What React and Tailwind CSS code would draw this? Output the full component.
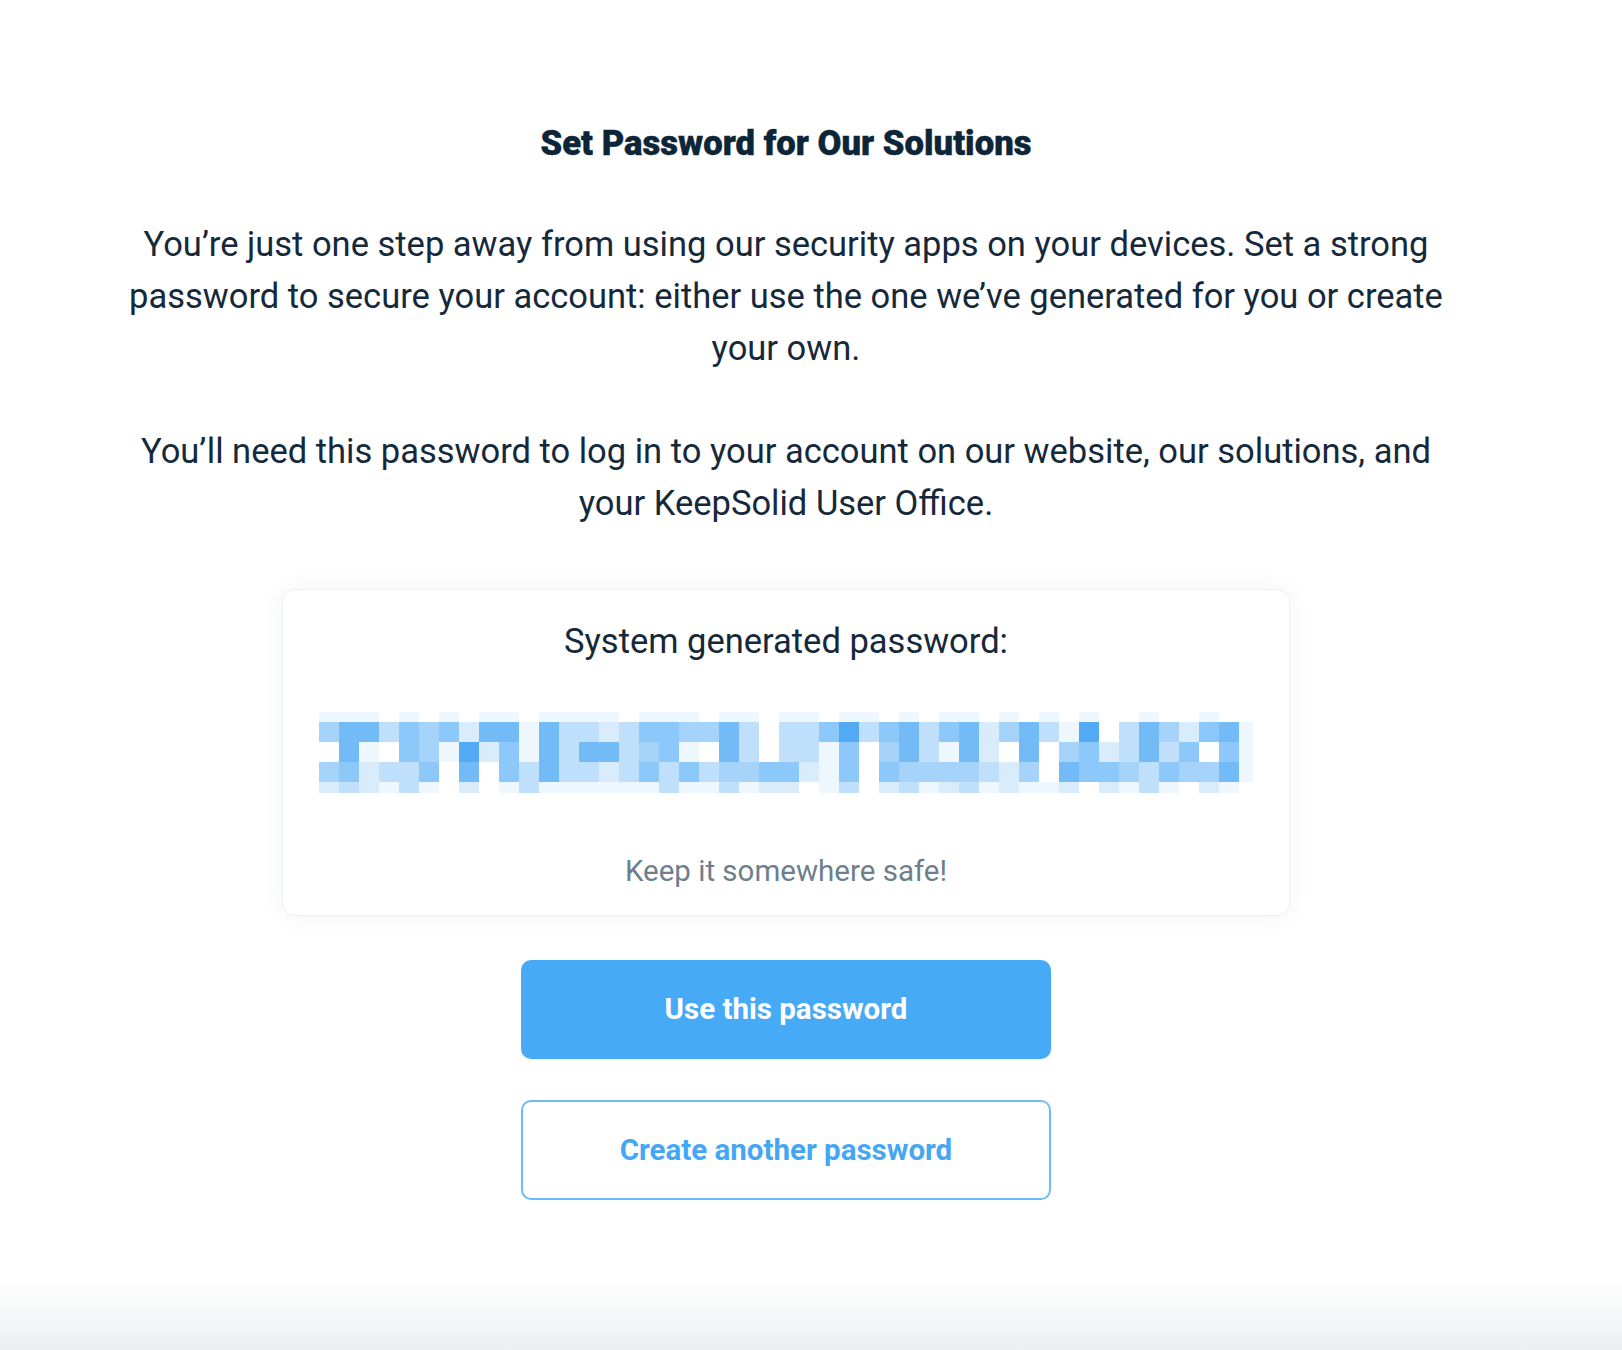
const palette = ["#ffffff", "#eef6fe", "#d9ecfc", "#bfdffb", "#a6d3fa", "#8cc8f9", "#72bbf7", "#52a9f4"];

// blurred password, one string per row, one digit per 20px cell
const rows = [
  { h: 10, cells: "1110101011011110111011011" + "01101011010" + "10100100100" },
  { h: 20, cells: "4663545266163323554463033" + "57356356246" + "31703642561" },
  { h: 20, cells: "0610541725163663451063033" + "15046316206" + "04523635051" },
  { h: 20, cells: "4523350605363323535344552" + "15054444324" + "06554354461" },
  { h: 11, cells: "2321310201311111131131220" + "13023123121" + "12021310210" },
];

function BlurredPassword() {
  let y = 0;
  const rects = [];
  rows.forEach((row, r) => {
    for (let c = 0; c < 47; c++) {
      const lvl = Number(row.cells[c] || 0);
      if (lvl === 0) continue;
      const w = c === 46 ? 14 : 20;
      rects.push(
        <rect key={r + "-" + c} x={c * 20} y={y} width={w} height={row.h} fill={palette[c === 46 ? Math.min(lvl, 1) : lvl]} />
      );
    }
    y += row.h;
  });
  return (
    <svg width="934" height="81" viewBox="0 0 934 81" shapeRendering="crispEdges" className="block">
      {rects}
    </svg>
  );
}

export default function App() {
  return (
    <div className="h-[1350px] w-full bg-[linear-gradient(to_bottom,#ffffff_1280px,#eceef0_1350px)] font-['Roboto',sans-serif]">
      <div className="flex flex-col items-center pt-[121px] pr-[50px]">
        <h1 className="text-[34.7px] leading-[44px] font-black text-[#0c2537] [-webkit-text-stroke:0.4px_#0c2537]">
          Set Password for Our Solutions
        </h1>

        <p className="mt-[53px] w-[1338px] text-center text-[34.5px] leading-[52px] text-[#15293b]">
          You’re just one step away from using our security apps on your devices. Set a strong password to secure your
          account: either use the one we’ve generated for you or create your own.
        </p>

        <p className="mt-[51px] w-[1338px] text-center text-[34.5px] leading-[52px] text-[#15293b]">
          You’ll need this password to log in to your account on our website, our solutions, and your KeepSolid User
          Office.
        </p>

        {/* generated password card */}
        <div className="mt-[60px] w-[1008px] rounded-[13px] border border-[#eceff3] bg-white shadow-[0_0_22px_rgba(20,50,80,0.06)] flex flex-col items-center pt-[31px] pb-[26px]">
          <p className="text-[34.5px] leading-[40px] text-[#15293b]">System generated password:</p>
          <div className="mt-[51px]">
            <BlurredPassword />
          </div>
          <p className="mt-[60px] text-[29.5px] leading-[36px] text-[#6d7f8d]">Keep it somewhere safe!</p>
        </div>

        <button className="mt-[44px] w-[530px] h-[99px] rounded-[10px] bg-[#47aaf6] text-white text-[29.5px] font-bold">
          Use this password
        </button>
        <button className="mt-[41px] w-[530px] h-[100px] rounded-[10px] border-2 border-[#6cbaf6] bg-white text-[#45a7f3] text-[29.5px] font-bold">
          Create another password
        </button>
      </div>
    </div>
  );
}
